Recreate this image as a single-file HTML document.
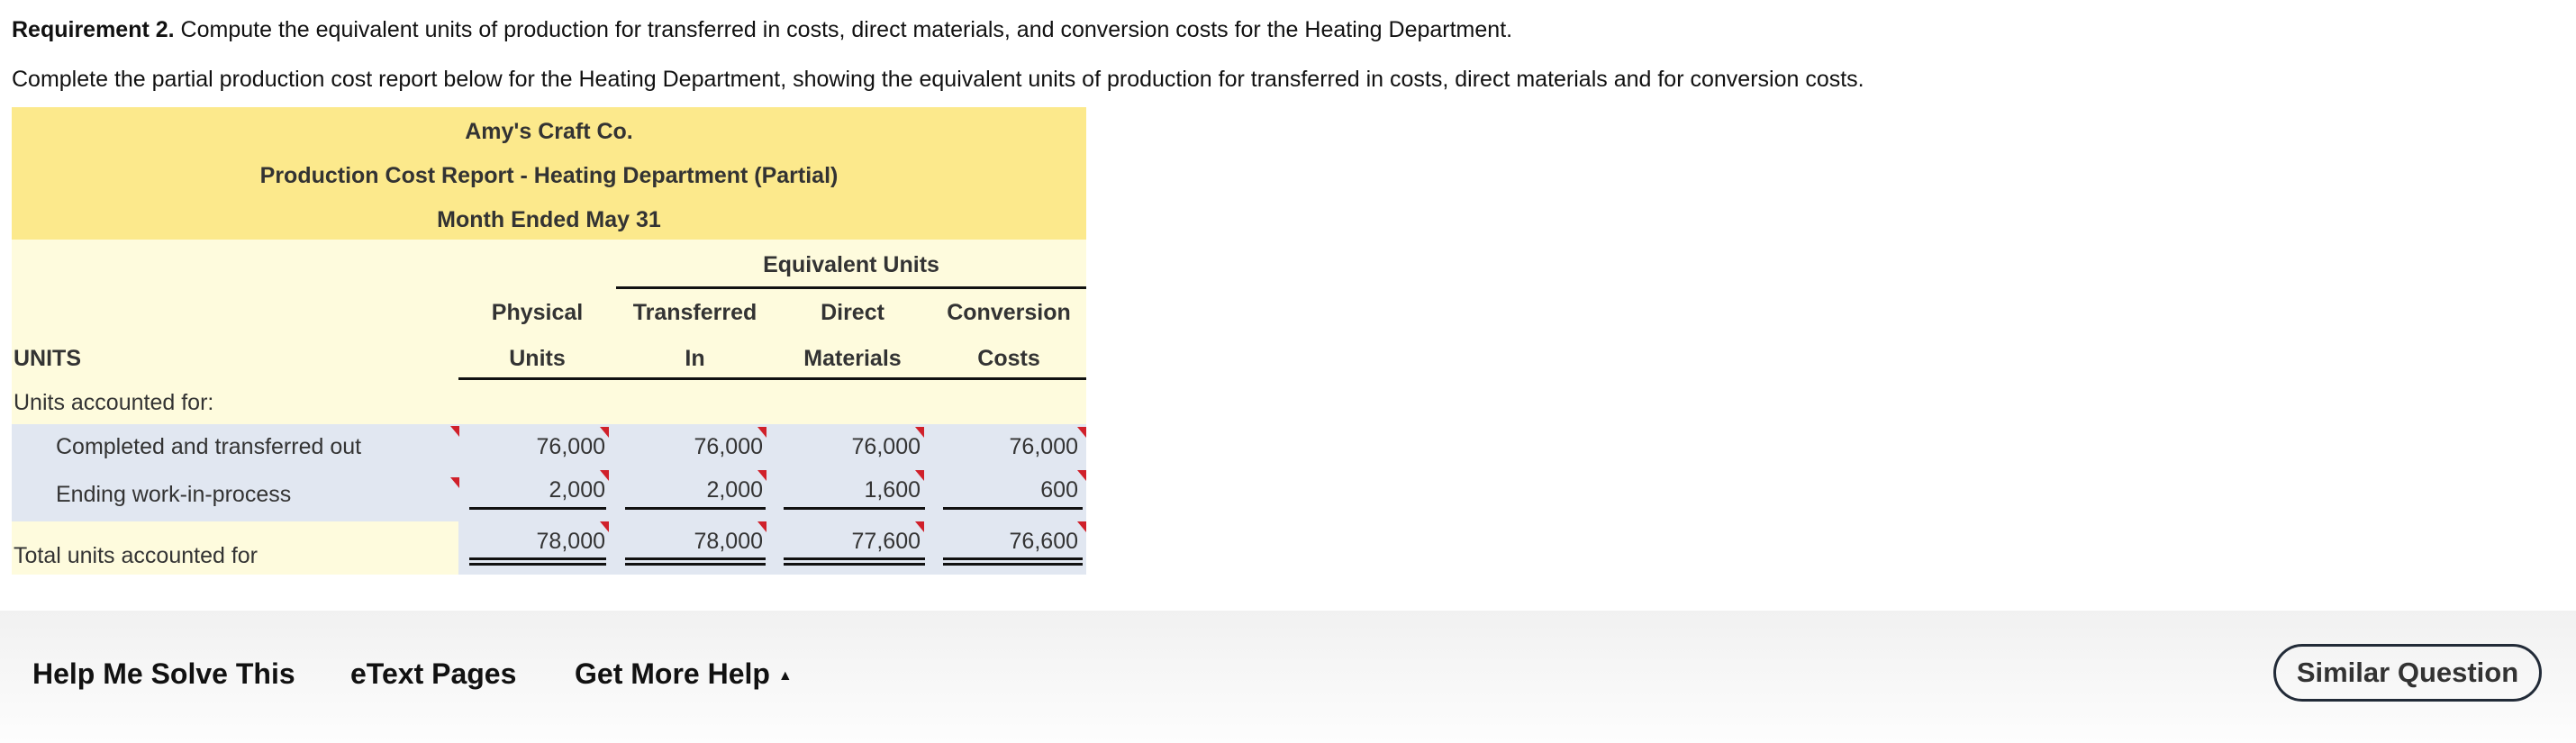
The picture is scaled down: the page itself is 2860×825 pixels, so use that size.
<!DOCTYPE html>
<html><head><meta charset="utf-8"><style>
body{margin:0;width:2860px;height:825px;background:#fff;font-family:"Liberation Sans",Arial,sans-serif;color:#222;position:relative;overflow:hidden}
.a{position:absolute;white-space:nowrap}
.t{font-size:25px;color:#333}
.b{font-weight:bold}
.c{text-align:center}
.r{text-align:right}
.tri{position:absolute;width:0;height:0;border-top:12px solid #d0202a;border-left:10px solid transparent}
.ln{position:absolute;height:3px;background:#111}
</style></head><body>
<div class="a" style="left:13px;top:19px;font-size:25px;color:#111"><b>Requirement 2.</b> Compute the equivalent units of production for transferred in costs, direct materials, and conversion costs for the Heating Department.</div>
<div class="a" style="left:13px;top:74px;font-size:25px;color:#111">Complete the partial production cost report below for the Heating Department, showing the equivalent units of production for transferred in costs, direct materials and for conversion costs.</div>

<div class="a" style="left:13px;top:119px;width:1193px;height:147px;background:#fce98c"></div>
<div class="a" style="left:13px;top:266px;width:1193px;height:205px;background:#fefbdd"></div>
<div class="a" style="left:13px;top:471px;width:1193px;height:108px;background:#e1e7f1"></div>
<div class="a" style="left:13px;top:579px;width:496px;height:59px;background:#fefbdd"></div>
<div class="a" style="left:509px;top:579px;width:697px;height:59px;background:#e1e7f1"></div>

<div class="a t b c" style="left:13px;width:1193px;top:132px">Amy's Craft Co.</div>
<div class="a t b c" style="left:13px;width:1193px;top:181px">Production Cost Report - Heating Department (Partial)</div>
<div class="a t b c" style="left:13px;width:1193px;top:230px">Month Ended May 31</div>

<div class="a t b c" style="left:684px;width:522px;top:280px">Equivalent Units</div>
<div class="ln" style="left:684px;width:522px;top:318px"></div>
<div class="a t b c" style="left:509px;width:175px;top:333px">Physical</div>
<div class="a t b c" style="left:684px;width:175px;top:333px">Transferred</div>
<div class="a t b c" style="left:859px;width:175px;top:333px">Direct</div>
<div class="a t b c" style="left:1034px;width:172px;top:333px">Conversion</div>
<div class="a t b" style="left:15px;top:384px">UNITS</div>
<div class="a t b c" style="left:509px;width:175px;top:384px">Units</div>
<div class="a t b c" style="left:684px;width:175px;top:384px">In</div>
<div class="a t b c" style="left:859px;width:175px;top:384px">Materials</div>
<div class="a t b c" style="left:1034px;width:172px;top:384px">Costs</div>
<div class="ln" style="left:509px;width:697px;top:419px"></div>

<div class="a t" style="left:15px;top:433px">Units accounted for:</div>
<div class="a t" style="left:62px;top:482px">Completed and transferred out</div>
<div class="a t" style="left:62px;top:535px">Ending work-in-process</div>
<div class="a t" style="left:15px;top:603px">Total units accounted for</div>
<div class="tri" style="left:500px;top:473px"></div>
<div class="tri" style="left:500px;top:530px"></div>

<div class="a t r" style="left:509px;width:163px;top:482px">76,000</div>
<div class="a t r" style="left:684px;width:163px;top:482px">76,000</div>
<div class="a t r" style="left:859px;width:163px;top:482px">76,000</div>
<div class="a t r" style="left:1034px;width:163px;top:482px">76,000</div>
<div class="a t r" style="left:509px;width:163px;top:530px">2,000</div>
<div class="a t r" style="left:684px;width:163px;top:530px">2,000</div>
<div class="a t r" style="left:859px;width:163px;top:530px">1,600</div>
<div class="a t r" style="left:1034px;width:163px;top:530px">600</div>
<div class="a t r" style="left:509px;width:163px;top:587px">78,000</div>
<div class="a t r" style="left:684px;width:163px;top:587px">78,000</div>
<div class="a t r" style="left:859px;width:163px;top:587px">77,600</div>
<div class="a t r" style="left:1034px;width:163px;top:587px">76,600</div>

<div class="ln" style="left:521px;width:152px;top:563px"></div>
<div class="ln" style="left:694px;width:156px;top:563px"></div>
<div class="ln" style="left:870px;width:157px;top:563px"></div>
<div class="ln" style="left:1047px;width:155px;top:563px"></div>
<div class="ln" style="left:521px;width:152px;top:619px"></div>
<div class="ln" style="left:694px;width:156px;top:619px"></div>
<div class="ln" style="left:870px;width:157px;top:619px"></div>
<div class="ln" style="left:1047px;width:155px;top:619px"></div>
<div class="ln" style="left:521px;width:152px;top:625px"></div>
<div class="ln" style="left:694px;width:156px;top:625px"></div>
<div class="ln" style="left:870px;width:157px;top:625px"></div>
<div class="ln" style="left:1047px;width:155px;top:625px"></div>

<div class="tri" style="left:666px;top:474px"></div><div class="tri" style="left:841px;top:474px"></div><div class="tri" style="left:1016px;top:474px"></div><div class="tri" style="left:1196px;top:474px"></div>
<div class="tri" style="left:666px;top:522px"></div><div class="tri" style="left:841px;top:522px"></div><div class="tri" style="left:1016px;top:522px"></div><div class="tri" style="left:1196px;top:522px"></div>
<div class="tri" style="left:666px;top:579px"></div><div class="tri" style="left:841px;top:579px"></div><div class="tri" style="left:1016px;top:579px"></div><div class="tri" style="left:1196px;top:579px"></div>

<div class="a" style="left:0;top:678px;width:2860px;height:147px;background:linear-gradient(#f1f1f1,#fdfdfd)"></div>
<div class="a b" style="left:36px;top:730px;font-size:32px;color:#111">Help Me Solve This</div>
<div class="a b" style="left:389px;top:730px;font-size:32px;color:#111">eText Pages</div>
<div class="a b" style="left:638px;top:730px;font-size:32px;color:#111">Get More Help <span style="font-size:16px;vertical-align:4px">▲</span></div>
<div class="a b c" style="left:2524px;top:715px;width:292px;height:58px;border:3px solid #222b38;border-radius:32px;font-size:31px;line-height:58px;color:#333">Similar Question</div>
</body></html>
